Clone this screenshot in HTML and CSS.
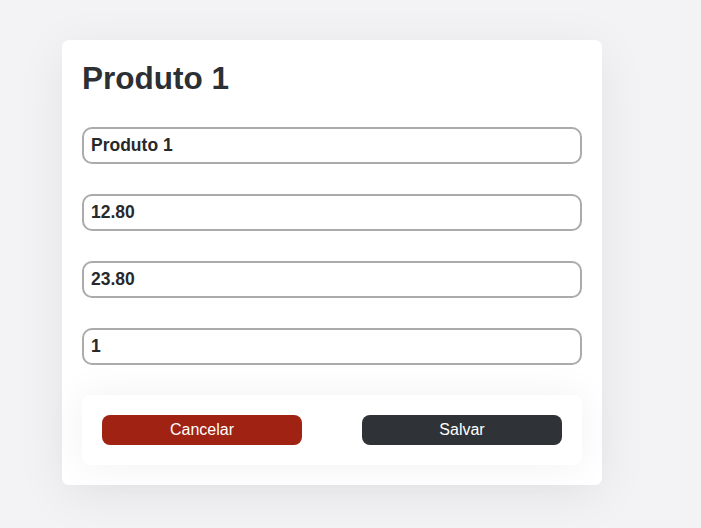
FILE: index.html
```html
<!DOCTYPE html>
<html lang="pt">
<head>
<meta charset="utf-8">
<title>Produto 1</title>
<link rel="stylesheet" href="styles.css">
</head>
<body>
<main class="page">
  <form class="card">
    <h1 class="title">Produto 1</h1>
    <div class="fields">
      <input class="field" type="text" value="Produto 1">
      <input class="field" type="text" value="12.80">
      <input class="field" type="text" value="23.80">
      <input class="field" type="text" value="1">
    </div>
    <div class="actions">
      <button type="button" class="btn btn-cancel">Cancelar</button>
      <button type="button" class="btn btn-save">Salvar</button>
    </div>
  </form>
</main>
</body>
</html>
```
FILE: styles.css
```css
* { box-sizing: border-box; }
html, body {
  margin: 0;
  height: 100%;
  background: #f3f3f5;
  font-family: "Liberation Sans", Arial, sans-serif;
}
.page {
  padding: 40px 0 0 62px;
}
.card {
  width: 540px;
  background: #fff;
  border-radius: 7px;
  padding: 20px 20px 20px;
  box-shadow: 0 10px 50px rgba(0, 0, 0, 0.07);
}
.title {
  margin: 0 0 30px;
  font-size: 31.5px;
  line-height: 37px;
  font-weight: 700;
  color: #2c3034;
}
.fields {
  display: flex;
  flex-direction: column;
  gap: 30px;
}
.field {
  width: 500px;
  height: 37px;
  border: 2px solid #ababab;
  border-radius: 10px;
  padding: 0 7px;
  font-family: "Liberation Sans", Arial, sans-serif;
  font-size: 17.5px;
  font-weight: 700;
  color: #27292c;
  background: #fff;
  outline: none;
}
.actions {
  margin-top: 30px;
  display: flex;
  justify-content: space-between;
  padding: 20px;
  background: #fff;
  border-radius: 8px;
  box-shadow: 0 0 40px rgba(0, 0, 0, 0.06);
}
.btn {
  width: 200px;
  height: 30px;
  border: none;
  border-radius: 8px;
  color: #fff;
  font-family: "Liberation Sans", Arial, sans-serif;
  font-size: 16px;
  padding: 0;
}
.btn-cancel { background: #a02213; }
.btn-save { background: #2f3337; }
```
